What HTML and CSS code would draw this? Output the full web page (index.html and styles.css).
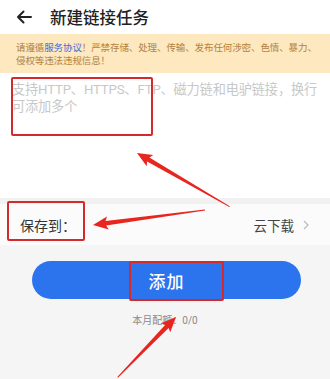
FILE: index.html
```html
<!DOCTYPE html>
<html lang="zh">
<head>
<meta charset="utf-8">
<link rel="stylesheet" href="styles.css">
</head>
<body>
<div class="page">
  <header class="header">
    <svg class="back" width="16" height="14" viewBox="0 0 16 14"><path d="M15 7H2M7.5 1.5L2 7l5.5 5.5" fill="none" stroke="#222" stroke-width="2" stroke-linecap="round" stroke-linejoin="round"/></svg>
    <h1 class="title">新建链接任务</h1>
  </header>
  <div class="notice">请遵循<span class="link">服务协议</span>！严禁存储、处理、传输、发布任何涉密、色情、暴力、<br>侵权等违法违规信息！</div>
  <div class="input">支持HTTP、HTTPS、FTP、磁力链和电驴链接，换行<br>可添加多个</div>
  <div class="row">
    <span class="label">保存到：</span>
    <span class="value">云下载<svg class="chev" width="6" height="10" viewBox="0 0 6 10"><path d="M1 1l4 4-4 4" fill="none" stroke="#bbb" stroke-width="1.2"/></svg></span>
  </div>
  <div class="actions">
    <button class="btn">添加</button>
    <div class="quota">本月配额：0/0</div>
  </div>

  <div class="mark mark1"></div>
  <div class="mark mark2"></div>
  <div class="mark mark3"></div>
  <svg class="arrows" width="330" height="379" viewBox="0 0 330 379">
    <g fill="#e8261f">
      <g transform="translate(137 153) rotate(30.1)"><polygon points="0,0 15,-6.5 13,-2.3 107,-0.5 107,0.5 13,2.3 15,6.5"/></g>
      <g transform="translate(93 225) rotate(-7.6)"><polygon points="0,0 15,-6.5 13,-2.3 113,-0.5 113,0.5 13,2.3 15,6.5"/></g>
      <g transform="translate(176 317) rotate(134)"><polygon points="0,0 15,-6.5 13,-2.3 84,-0.5 84,0.5 13,2.3 15,6.5"/></g>
    </g>
  </svg>
</div>
</body>
</html>
```

FILE: styles.css
```css
* { box-sizing: border-box; }
html, body { margin: 0; padding: 0; }
body {
  width: 330px;
  height: 379px;
  overflow: hidden;
  background: #f5f5f5;
  font-family: Roboto, "Noto Sans CJK SC", sans-serif;
}
.page {
  position: relative;
  width: 330px;
  height: 379px;
}
.header {
  height: 34px;
  background: #fff;
  display: flex;
  align-items: center;
  padding-left: 16px;
}
.back { display: block; margin-right: 18px; }
.title {
  margin: 0;
  font-size: 16.5px;
  font-weight: 500;
  color: #222;
}
.notice {
  background: #fde8bf;
  color: #b2823f;
  font-size: 9.5px;
  line-height: 13px;
  letter-spacing: -0.1px;
  white-space: nowrap;
  overflow: hidden;
  padding: 7px 4px 6px 16px;
  height: 39px;
}
.link { color: #3c6fd6; }
.input {
  background: #fff;
  height: 125px;
  padding: 8px 4px 0 12px;
  font-size: 13.2px;
  line-height: 17px;
  letter-spacing: -0.15px;
  white-space: nowrap;
  overflow: hidden;
  color: #c8c8c8;
}
.row {
  height: 47px;
  background: #fbfbfb;
  border-top: 6px solid #f1f1f1;
  display: flex;
  align-items: center;
  justify-content: space-between;
  padding: 0 21px 0 20px;
  font-size: 14px;
}
.label { color: #333; }
.value { color: #444; font-size: 13.5px; display: flex; align-items: center; }
.chev { margin-left: 9px; }
.actions {
  padding-top: 16px;
  display: flex;
  flex-direction: column;
  align-items: center;
}
.btn {
  width: 269px;
  height: 38px;
  margin-left: 3px;
  border: none;
  border-radius: 19px;
  background: #2b74ee;
  color: #fff;
  font-family: inherit;
  font-size: 17px;
  font-weight: 500;
  letter-spacing: 1px;
}
.quota {
  margin-top: 13px;
  font-size: 10px;
  color: #8a8a8a;
}
.mark {
  position: absolute;
  border: 2px solid #d6292b;
  border-radius: 2px;
}
.mark1 { left: 11px; top: 77px; width: 142px; height: 59px; }
.mark2 { left: 7px; top: 201px; width: 78px; height: 40px; }
.mark3 { left: 129px; top: 261px; width: 95px; height: 40px; }
.arrows { position: absolute; left: 0; top: 0; }
```
